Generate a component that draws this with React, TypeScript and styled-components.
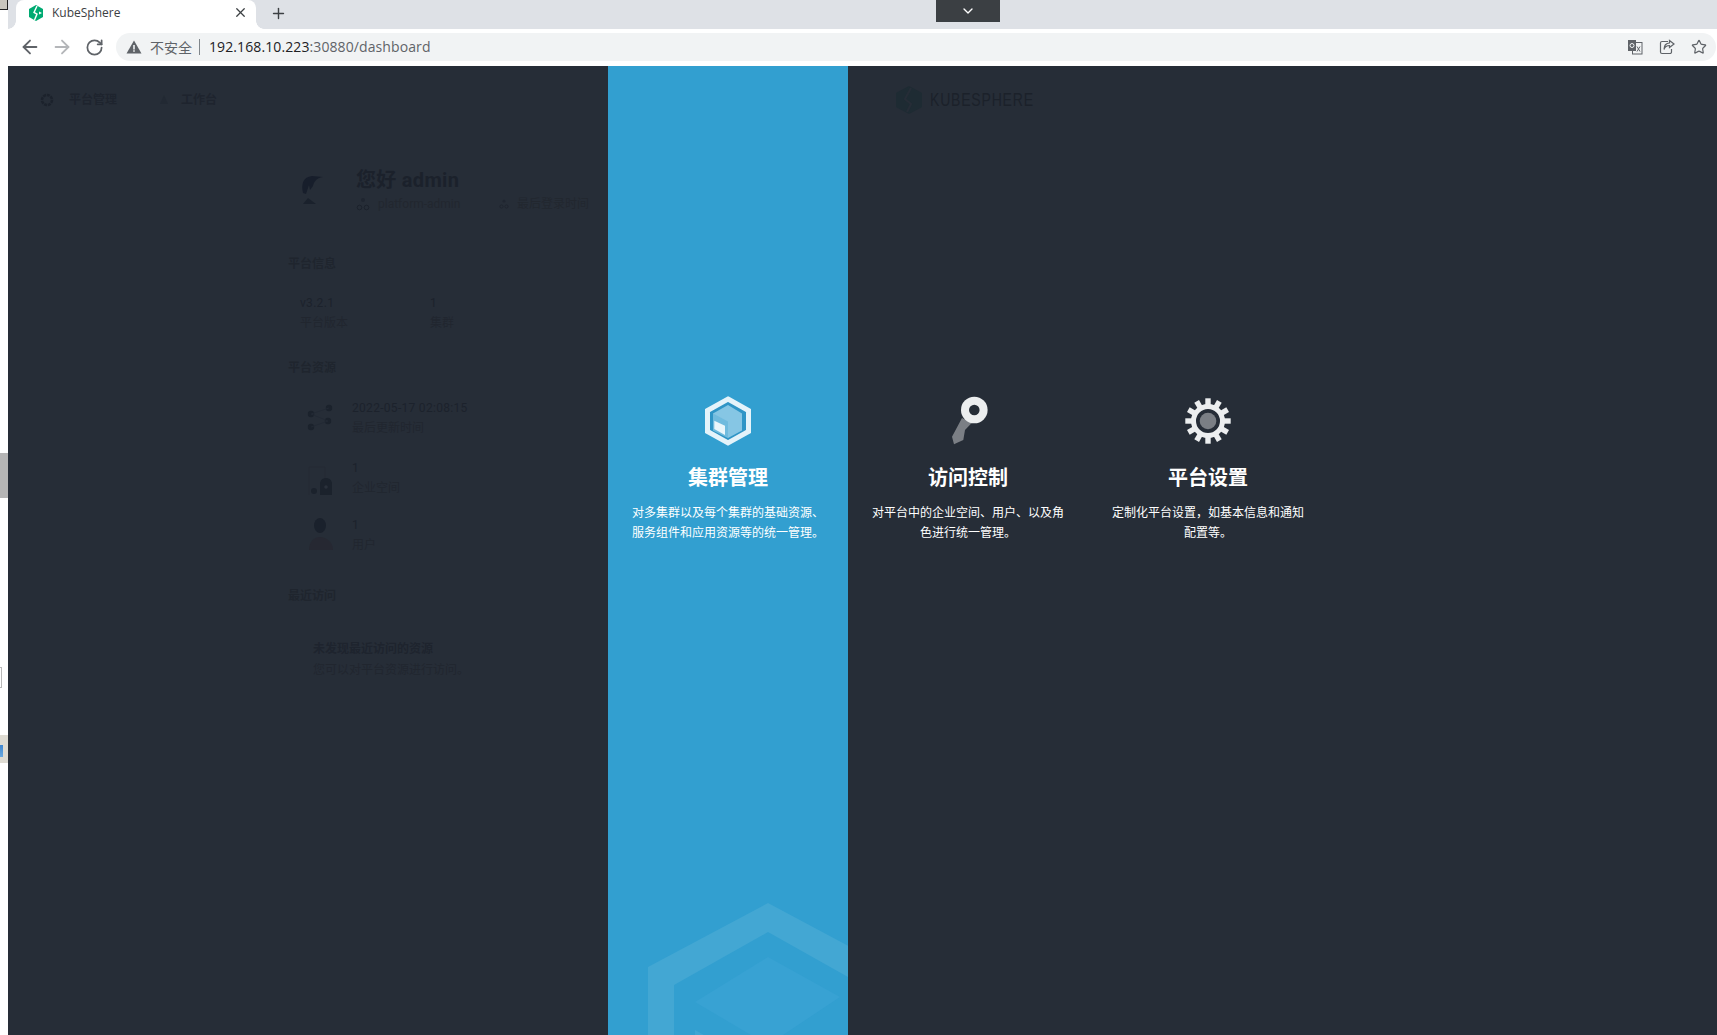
import React from "react";
import styled, { createGlobalStyle } from "styled-components";
import { ArrowLeft, ArrowRight, RotateCw, Plus, X, ChevronDown, Star } from "lucide-react";

const Global = createGlobalStyle`
  html, body { margin: 0; padding: 0; height: 100%; overflow: hidden; background: #fff; }
  #root { height: 100%; }
  * { box-sizing: border-box; }
`;

const FONT = `"Noto Sans", "Noto Sans CJK SC", sans-serif`;
const CJK = `Roboto, "Noto Sans CJK SC", sans-serif`;

const Shell = styled.div`
  display: grid;
  grid-template-columns: 8px 1fr;
  width: 1717px;
  height: 1035px;
  overflow: hidden;
  font-family: ${FONT};
`;

const Strip = styled.div`
  display: flex;
  flex-direction: column;
  background: #fff;
`;
const StripCorner = styled.div`
  width: 8px;
  height: 10px;
  background: #c9c6be;
  border: 1px solid #222;
  border-left: 0;
  border-top: 0;
`;
const StripBlock = styled.div`
  width: 8px;
  height: 45px;
  margin-top: 443px;
  background: #b5b5b5;
`;
const StripField = styled.div`
  width: 2px;
  height: 21px;
  margin-top: 169px;
  border: 1px solid #b8b8b8;
  border-left: 0;
`;
const StripThumb = styled.div`
  width: 8px;
  height: 28px;
  margin-top: 47px;
  padding: 10px 5px 6px 0;
  background: #dedbd2;
  &::after {
    content: "";
    display: block;
    height: 100%;
    background: linear-gradient(#3f86cf, #6aa9e0);
  }
`;

const Browser = styled.div`
  display: flex;
  flex-direction: column;
  min-width: 0;
  height: 1035px;
`;

const TabStrip = styled.div`
  position: relative;
  display: flex;
  align-items: flex-end;
  height: 29px;
  padding-left: 8px;
  background: #dee1e6;
`;
const Tab = styled.div`
  position: relative;
  display: flex;
  align-items: center;
  width: 240px;
  height: 29px;
  padding: 0 8px 4px 13px;
  background: #fff;
  border-radius: 8px 8px 0 0;
  color: #3c4043;
  font-size: 12px;
  &::before,
  &::after {
    content: "";
    position: absolute;
    bottom: 0;
    width: 8px;
    height: 8px;
  }
  &::before {
    left: -8px;
    background: radial-gradient(circle at 0 0, #dee1e6 7.500px, #fff 8px);
  }
  &::after {
    right: -8px;
    background: radial-gradient(circle at 100% 0, #dee1e6 7.500px, #fff 8px);
  }
`;
const TabTitle = styled.span`
  flex: 1;
  margin-left: 9px;
  font-family: "Open Sans", sans-serif;
`;
const TabClose = styled(X)`
  color: #3c4043;
`;
const NewTab = styled(Plus)`
  margin: 0 0 7px 14px;
  color: #3c4043;
`;
const Notch = styled.div`
  position: absolute;
  top: 0;
  left: 928px;
  display: flex;
  align-items: center;
  justify-content: center;
  width: 64px;
  height: 22px;
  background: #3b3f43;
  color: #fff;
`;

const Toolbar = styled.div`
  display: flex;
  align-items: center;
  height: 37px;
  padding: 0 1px 1px 6px;
  background: #fff;
`;
const NavButton = styled.div<{ $off?: boolean }>`
  display: flex;
  width: 32px;
  justify-content: center;
  color: ${(p) => (p.$off ? "#b4b6b9" : "#5f6368")};
`;
const Omnibox = styled.div`
  display: flex;
  align-items: center;
  flex: 1;
  height: 28px;
  margin-left: 6px;
  padding: 0 9px 0 10px;
  background: #f1f3f4;
  border-radius: 14px;
  font-size: 14px;
`;
const Insecure = styled.span`
  margin-left: 8px;
  padding-right: 7px;
  border-right: 1px solid #80868b;
  color: #5f6368;
  font-size: 14px;
  line-height: 16px;
  font-family: "Noto Sans CJK SC", sans-serif;
`;
const Url = styled.span`
  flex: 1;
  margin-left: 9px;
  padding-bottom: 2px;
  color: #5f6368;
  font-size: 14px;
  font-family: "Open Sans", sans-serif;
  letter-spacing: 0.1px;
`;
const Host = styled.span`
  color: #202124;
`;
const EndIcons = styled.div`
  display: flex;
  align-items: center;
  gap: 16px;
  color: #5f6368;
`;

const Page = styled.div`
  flex: 1;
  display: grid;
  grid-template-columns: 600px 240px 1fr;
  min-height: 0;
  background: #262d37;
`;

/* dimmed dashboard below the overlay */
const Under = styled.div`
  display: flex;
  flex-direction: column;
  min-width: 0;
  overflow: hidden;
  font-family: ${CJK};
  font-size: 12px;
  line-height: 20px;
  color: #1e242e;
`;
const UnderNav = styled.div`
  display: flex;
  align-items: center;
  height: 68px;
  padding-left: 31px;
  font-weight: 700;
`;
const UnderNavItem = styled.span<{ $gap: number; $w?: number }>`
  display: flex;
  align-items: center;
  gap: ${(p) => p.$gap}px;
  width: ${(p) => p.$w ?? 100}px;
  white-space: nowrap;
`;
const UnderBody = styled.div`
  display: flex;
  flex-direction: column;
  padding-left: 280px;
`;
const Hello = styled.div`
  display: flex;
  margin-top: 32px;
`;
const AvatarBox = styled.div`
  width: 68px;
  padding-left: 12px;
`;
const HelloTitle = styled.div`
  font-size: 20px;
  line-height: 28px;
  font-weight: 700;
  letter-spacing: 0.3px;
  color: #1b212b;
`;
const MetaRow = styled.div`
  display: flex;
  align-items: center;
  white-space: nowrap;
  color: #22272f;
`;
const MetaItem = styled.span<{ $w: number }>`
  display: flex;
  align-items: center;
  gap: 8px;
  width: ${(p) => p.$w}px;
`;
const SectionTitle = styled.div<{ $top: number }>`
  margin-top: ${(p) => p.$top}px;
  font-weight: 700;
  color: #1f252e;
`;
const InfoRow = styled.div`
  display: flex;
  margin-top: 19px;
  padding-left: 12px;
`;
const InfoCell = styled.div`
  width: 130px;
`;
const Value = styled.div`
  color: #1c222c;
  letter-spacing: 0.3px;
`;
const Label = styled.div`
  color: #21262f;
`;
const ResRow = styled.div<{ $top: number }>`
  display: flex;
  align-items: center;
  gap: 8px;
  margin-top: ${(p) => p.$top}px;
  padding-left: 8px;
`;
const ResIcon = styled.div`
  display: flex;
  justify-content: center;
  width: 48px;
`;
const Empty = styled.div`
  margin-top: 33px;
  padding-left: 25px;
`;
const EmptyTitle = styled.div`
  font-weight: 700;
  color: #1e242e;
  margin-bottom: 1px;
`;

/* overlay menu */
const MenuItem = styled.div`
  position: relative;
  display: flex;
  flex-direction: column;
  align-items: center;
  width: 240px;
  padding: 0 24px;
  color: #fff;
  text-align: center;
  font-family: "Noto Sans CJK SC", sans-serif;
  z-index: 1;
`;
const MenuTitle = styled.div`
  margin-top: 12px;
  font-size: 20px;
  line-height: 28px;
  font-weight: 700;
`;
const MenuText = styled.div`
  margin-top: 11px;
  font-size: 12px;
  line-height: 20px;
`;
const BluePanel = styled.div`
  position: relative;
  overflow: hidden;
  padding-top: 325px;
  background: #329fd0;
`;
const Watermark = styled.svg`
  position: absolute;
  left: 0;
  bottom: 0;
`;
const RightArea = styled.div`
  display: flex;
  flex-direction: column;
`;
const LogoRow = styled.div`
  display: flex;
  align-items: center;
  gap: 8px;
  height: 68px;
  padding-left: 48px;
  color: #1b212a;
  font-family: "Liberation Sans", sans-serif;
  font-size: 18px;
  letter-spacing: 1px;
`;
const LogoWord = styled.span`
  display: inline-block;
  transform: scaleX(0.78);
  transform-origin: left center;
`;
const MenuRow = styled.div`
  display: flex;
  margin-top: 257px;
`;

const Favicon = () => (
  <svg width="14" height="16" viewBox="0 0 14 16">
    <path d="M7 0 14 4v8l-7 4-7-4V4z" fill="#00aa72" />
    <path d="M8 1 5 7.500 8 9 5.500 15" stroke="#fff" strokeWidth="1.400" fill="none" />
    <path d="M10 6.500l3 1.500-3 1.500z" fill="#fff" />
  </svg>
);

const Warning = () => (
  <svg width="16" height="16" viewBox="0 0 16 16">
    <path d="M8 1.500 15.500 14.500H.5z" fill="#5f6368" />
    <path d="M7.200 6h1.600v4.500H7.200zM7.200 11.300h1.600v1.500H7.200z" fill="#f1f3f4" />
  </svg>
);

const Translate = () => (
  <svg width="16" height="16" viewBox="0 0 16 16">
    <rect x="5.500" y="3.500" width="9.500" height="11.500" fill="#f1f3f4" stroke="#5f6368" />
    <rect x="1" y="1" width="8" height="11" fill="#5f6368" />
    <circle cx="5" cy="6.500" r="2" fill="none" stroke="#f1f3f4" />
    <path d="M10 7.500l3 5M13 7.500l-3 5" stroke="#5f6368" />
  </svg>
);

const Share = () => (
  <svg width="16" height="16" viewBox="0 0 16 16" fill="none" stroke="#5f6368" strokeWidth="1.200">
    <path d="M9 2.500H3A1.500 1.500 0 0 0 1.500 4v9A1.500 1.500 0 0 0 3 14.500h8a1.500 1.500 0 0 0 1.500-1.500v-3" />
    <path d="M10.500 1.500 15 5l-4.500 3.500V6.500C8 6.500 6 7.500 5 10.500c0-4 2-6.500 5.500-6.500z" fill="#f1f3f4" />
  </svg>
);

const ClusterIcon = () => (
  <svg width="60" height="60" viewBox="0 0 60 60">
    <path d="M30 8 50.500 19.500v21L30 52 9.500 40.500v-21z" fill="#2f95c6" stroke="#e4f3fa" strokeWidth="5" />
    <path d="M30 14 44 22.500v17L30 47 15 39.500v-17z" fill="#86c6e4" />
    <path d="M30 47 15 39.500v-17l15 8z" fill="#5aafd8" opacity=".5" />
    <path d="M16.300 29.700 27 34.700v9.300L16.300 38z" fill="#eaf6fb" />
  </svg>
);

const KeyIcon = () => (
  <svg width="60" height="60" viewBox="0 0 60 60">
    <path d="M24 27 33.700 32 27 39 25.300 49 20.300 51.300 16 53.300 14 45.700z" fill="#7b7f85" />
    <circle cx="36.300" cy="19" r="13.300" fill="#eceeef" />
    <circle cx="36.300" cy="19" r="5.300" fill="#262d37" />
  </svg>
);

const GearIcon = () => (
  <svg width="60" height="60" viewBox="0 0 60 60">
    {Array.from({ length: 12 }, (_, i) => (
      <rect key={i} x="27.300" y="7.300" width="5.400" height="10" fill="#eceeef" transform={`rotate(${i * 30} 30 30)`} />
    ))}
    <circle cx="30" cy="30" r="14.500" fill="none" stroke="#eceeef" strokeWidth="5" />
    <circle cx="30" cy="30" r="8.300" fill="#7b7f85" />
  </svg>
);

const UnderGear = () => (
  <svg width="16" height="16" viewBox="0 0 16 16">
    <circle cx="8" cy="8" r="5" fill="none" stroke="#1c222c" strokeWidth="2.500" strokeDasharray="3 .8" />
  </svg>
);

const UnderDot = () => (
  <svg width="14" height="14" viewBox="0 0 14 14">
    <path d="M7 2 11 11H3z" fill="#222933" />
  </svg>
);

const UnderAvatar = () => (
  <svg width="32" height="40" viewBox="0 0 32 40">
    <path d="M3 27C1 18 3 11 12 10l11 1c-7 1-9 5-10 9l-3 4-1-5-3 9z" fill="#171e2b" />
    <path d="M3 38 8 32l8 6H6z" fill="#1a212c" />
  </svg>
);

const MetaPerson = () => (
  <svg width="14" height="14" viewBox="0 0 14 14">
    <circle cx="7" cy="3" r="2" fill="#1f2530" />
    <circle cx="3.500" cy="10.500" r="2.300" fill="none" stroke="#1c222c" />
    <circle cx="10.500" cy="10.500" r="2.300" fill="none" stroke="#1c222c" />
  </svg>
);

const NodesIcon = () => (
  <svg width="40" height="40" viewBox="0 0 40 40" fill="#1b222c">
    <circle cx="29" cy="10" r="3.200" />
    <circle cx="11" cy="16" r="3.200" />
    <circle cx="28" cy="23" r="3.200" />
    <circle cx="11" cy="29" r="3.200" />
    <path d="M11 16 29 10M11 16 28 23M11 29 28 23" stroke="#222934" fill="none" />
  </svg>
);

const LockIcon = () => (
  <svg width="40" height="40" viewBox="0 0 40 40">
    <path d="M9 37V9h16v11" stroke="#242b35" fill="none" />
    <circle cx="14" cy="33" r="3" fill="#1b222c" />
    <path d="M20 37V26c0-8 12-8 12 0v11z" fill="#1b222c" />
    <circle cx="26" cy="29" r="1.800" fill="#2a313b" />
  </svg>
);

const UserIcon = () => (
  <svg width="40" height="40" viewBox="0 0 40 40">
    <ellipse cx="20" cy="10.500" rx="6" ry="7.500" fill="#1a212c" />
    <path d="M9 35c0-8 5-13 11-13s13 5 13 13z" fill="#262832" />
  </svg>
);

const KsLogo = () => (
  <svg width="26" height="28" viewBox="0 0 26 28">
    <path d="M13 0 26 7v14l-13 7-13-7V7z" fill="#1e2b33" />
    <path d="M15 2 9 13l6 5-4 8" stroke="#262d37" strokeWidth="2" fill="none" />
  </svg>
);

const BlueMark = () => (
  <Watermark width="240" height="140" viewBox="0 0 240 140">
    <path
      fillRule="evenodd"
      d="M160 8 280 72V200H40V72zM160 37 66 90V200H254V90z"
      fill="#43a7d3"
    />
    <path d="M160 62 232 102 160 150 87 107z" fill="#38a2d3" />
    <path d="M87 135 160 176H87z" fill="#3fa6d4" />
  </Watermark>
);

export default function App() {
  return (
    <Shell>
      <Global />
      <Strip>
        <StripCorner />
        <StripBlock />
        <StripField />
        <StripThumb />
      </Strip>
      <Browser>
        <TabStrip>
          <Tab>
            <Favicon />
            <TabTitle>KubeSphere</TabTitle>
            <TabClose size={15} strokeWidth={2} />
          </Tab>
          <NewTab size={17} strokeWidth={2} />
          <Notch>
            <ChevronDown size={16} strokeWidth={2} />
          </Notch>
        </TabStrip>
        <Toolbar>
          <NavButton><ArrowLeft size={22} strokeWidth={2} /></NavButton>
          <NavButton $off><ArrowRight size={22} strokeWidth={2} /></NavButton>
          <NavButton><RotateCw size={19} strokeWidth={2.200} /></NavButton>
          <Omnibox>
            <Warning />
            <Insecure>不安全</Insecure>
            <Url><Host>192.168.10.223</Host>:30880/dashboard</Url>
            <EndIcons>
              <Translate />
              <Share />
              <Star size={16} strokeWidth={1.800} />
            </EndIcons>
          </Omnibox>
        </Toolbar>
        <Page>
          <Under>
            <UnderNav>
              <UnderNavItem $gap={14} $w={118}><UnderGear />平台管理</UnderNavItem>
              <UnderNavItem $gap={10}><UnderDot />工作台</UnderNavItem>
            </UnderNav>
            <UnderBody>
              <Hello>
                <AvatarBox><UnderAvatar /></AvatarBox>
                <div>
                  <HelloTitle>您好 admin</HelloTitle>
                  <MetaRow>
                    <MetaItem $w={143}><MetaPerson />platform-admin</MetaItem>
                    <MetaItem $w={90}><MetaPerson />最后登录时间</MetaItem>
                  </MetaRow>
                </div>
              </Hello>
              <SectionTitle $top={40}>平台信息</SectionTitle>
              <InfoRow>
                <InfoCell><Value>v3.2.1</Value><Label>平台版本</Label></InfoCell>
                <InfoCell><Value>1</Value><Label>集群</Label></InfoCell>
              </InfoRow>
              <SectionTitle $top={25}>平台资源</SectionTitle>
              <ResRow $top={20}>
                <ResIcon><NodesIcon /></ResIcon>
                <div><Value>2022-05-17 02:08:15</Value><Label>最后更新时间</Label></div>
              </ResRow>
              <ResRow $top={20}>
                <ResIcon><LockIcon /></ResIcon>
                <div><Value>1</Value><Label>企业空间</Label></div>
              </ResRow>
              <ResRow $top={17}>
                <ResIcon><UserIcon /></ResIcon>
                <div><Value>1</Value><Label>用户</Label></div>
              </ResRow>
              <SectionTitle $top={31}>最近访问</SectionTitle>
              <Empty>
                <EmptyTitle>未发现最近访问的资源</EmptyTitle>
                <Label>您可以对平台资源进行访问。</Label>
              </Empty>
            </UnderBody>
          </Under>
          <BluePanel>
            <BlueMark />
            <MenuItem>
              <ClusterIcon />
              <MenuTitle>集群管理</MenuTitle>
              <MenuText>对多集群以及每个集群的基础资源、服务组件和应用资源等的统一管理。</MenuText>
            </MenuItem>
          </BluePanel>
          <RightArea>
            <LogoRow><KsLogo /><LogoWord>KUBESPHERE</LogoWord></LogoRow>
            <MenuRow>
              <MenuItem>
                <KeyIcon />
                <MenuTitle>访问控制</MenuTitle>
                <MenuText>对平台中的企业空间、用户、以及角色进行统一管理。</MenuText>
              </MenuItem>
              <MenuItem>
                <GearIcon />
                <MenuTitle>平台设置</MenuTitle>
                <MenuText>定制化平台设置，如基本信息和通知配置等。</MenuText>
              </MenuItem>
            </MenuRow>
          </RightArea>
        </Page>
      </Browser>
    </Shell>
  );
}
